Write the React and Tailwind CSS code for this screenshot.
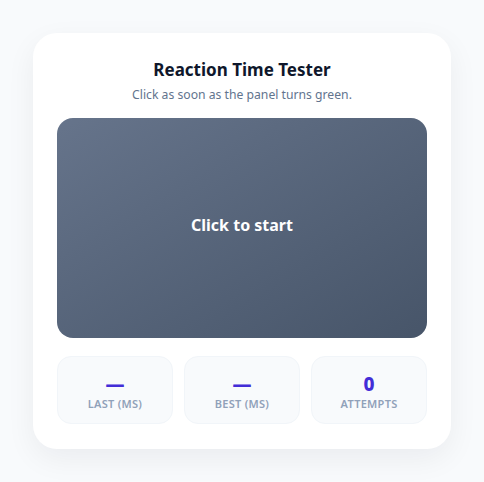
import React, { useState } from "react";

function Stat({ value, label }) {
  return (
    <div className="flex flex-col items-center justify-center rounded-[14px] border border-slate-100 bg-slate-50 h-[68px]">
      <div className="mt-[5px] text-[19px] font-extrabold leading-6 text-indigo-700">{value}</div>
      <div className="text-[11px] font-semibold uppercase tracking-wide text-slate-400">
        {label}
      </div>
    </div>
  );
}

export default function App() {
  const [attempts] = useState(0);

  return (
    <div
      className="min-h-screen bg-slate-50 flex items-center justify-center"
      style={{ fontFamily: '"Noto Sans", "Open Sans", sans-serif' }}
    >
      <div className="w-[418px] rounded-[24px] bg-white px-6 pt-6 pb-[25px] shadow-[0_10px_30px_rgba(15,23,42,0.06)]">
        <h1 className="text-center text-[17px] font-bold leading-[26px] text-slate-900">
          Reaction Time Tester
        </h1>
        <p className="mt-[2px] text-center text-[12.2px] leading-5 text-slate-500">
          Click as soon as the panel turns green.
        </p>

        {/* Panel */}
        <button className="mt-[13px] flex h-[220px] w-full items-center justify-center rounded-[16px] bg-gradient-to-br from-[#66748b] to-[#475569] pb-[6px] text-[16px] font-bold text-white">
          Click to start
        </button>

        {/* Stats */}
        <div className="mt-[18px] grid grid-cols-3 gap-[11px]">
          <Stat value="—" label="Last (ms)" />
          <Stat value="—" label="Best (ms)" />
          <Stat value={attempts} label="Attempts" />
        </div>
      </div>
    </div>
  );
}
